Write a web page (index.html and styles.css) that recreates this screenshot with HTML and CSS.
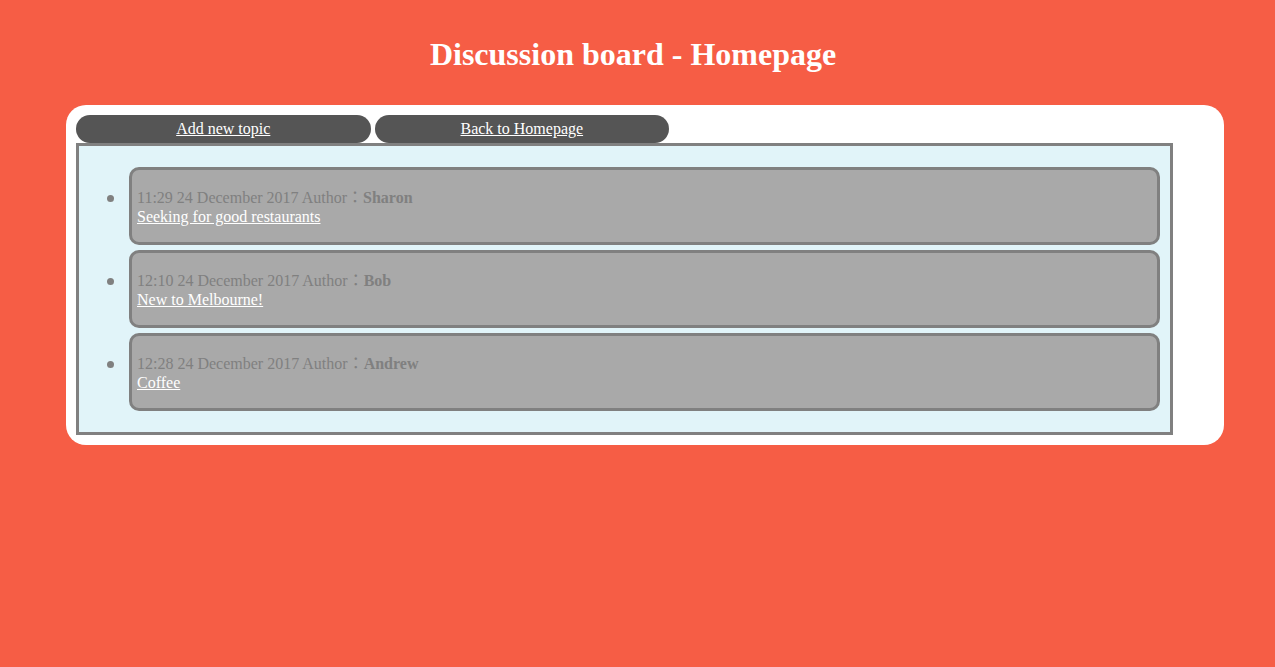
FILE: index.html
```html
<!DOCTYPE html>
<html lang="en">
<head>
<meta charset="utf-8">
<title>Discussion board - Homepage</title>
<link rel="stylesheet" href="styles.css">
</head>
<body>
<h1 class="title">Discussion board - Homepage</h1>
<main class="panel">
<nav class="menu">
<a class="menu-link" href="#">Add new topic</a>
<a class="menu-link" href="#">Back to Homepage</a>
</nav>
<section class="board">
<ul class="topics">
<li class="topic"><div class="card">11:29 24 December 2017 Author：<b>Sharon</b><br><a class="topic-link" href="#">Seeking for good restaurants</a></div></li>
<li class="topic"><div class="card">12:10 24 December 2017 Author：<b>Bob</b><br><a class="topic-link" href="#">New to Melbourne!</a></div></li>
<li class="topic"><div class="card">12:28 24 December 2017 Author：<b>Andrew</b><br><a class="topic-link" href="#">Coffee</a></div></li>
</ul>
</section>
</main>
</body>
</html>
```
FILE: styles.css
```css
body {
  margin: 0;
  padding: 35px 51px 0 66px;
  background: #f65d45;
  color: gray;
  font: 16px/19px "Liberation Serif", "Noto Sans CJK JP", serif;
}

.title {
  margin: 0 0 32px;
  padding-right: 24px;
  color: white;
  font-size: 32px;
  line-height: 38px;
  text-align: center;
}

.panel {
  padding: 10px 51px 10px 10px;
  border-radius: 20px;
  background: white;
}

.menu {
  display: flex;
  gap: 4px;
}

.menu-link {
  box-sizing: border-box;
  width: 26.85%;
  padding: 4px 0 5px;
  border-radius: 14px;
  background: #555;
  color: white;
  text-align: center;
}

.board {
  padding: 21px 10px 21px 28px;
  border: 3px solid gray;
  background: #e1f4f9;
}

.topics {
  display: grid;
  gap: 5px;
  margin: 0;
  padding: 0;
  list-style: none;
}

.topic {
  display: flex;
  gap: 15px;
}

/* round list bullet */
.topic::before {
  content: "";
  flex: none;
  width: 7px;
  height: 7px;
  margin-top: 28px;
  border-radius: 50%;
  background: gray;
}

.card {
  flex: 1;
  padding: 18px 5px 16px;
  border: 3px solid gray;
  border-radius: 10px;
  background: darkgray;
}

.topic-link {
  color: white;
}
```
